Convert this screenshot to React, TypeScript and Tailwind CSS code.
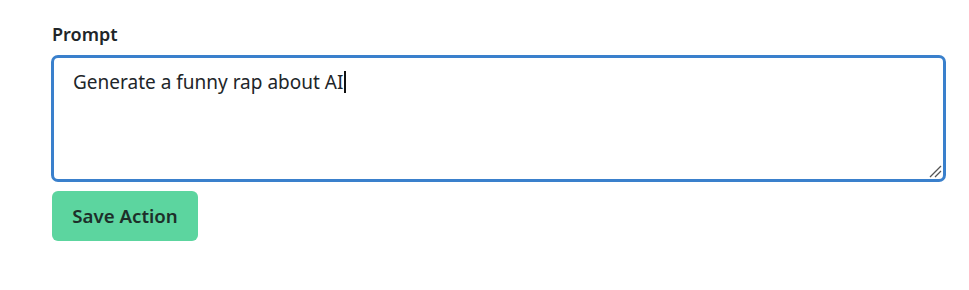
export default function App() {
  return (
    <div
      className="min-h-screen bg-white px-[52px] pt-[22px] text-[#212529]"
      style={{ fontFamily: '"Segoe UI", "Noto Sans", "Open Sans", sans-serif' }}
    >
      <label className="block text-[18px] font-semibold leading-6">Prompt</label>
      <div className="relative mt-[9px] -ml-px h-[127px] w-[895px] rounded-[7px] border-[3px] border-[#3a80cc] px-[19px] pt-[9px]">
        <p className="text-[19px] leading-7">
          Generate a funny rap about AI
          <span className="ml-px inline-block h-[22px] w-[2px] translate-y-[4px] bg-[#111]" />
        </p>
        <svg
          viewBox="0 0 14 14"
          className="absolute bottom-[1px] right-[1px] h-[14px] w-[14px]"
          fill="none"
          stroke="#555"
          strokeWidth="1.3"
        >
          <path d="M2 13L13 2M7 13L13 7" />
        </svg>
      </div>
      <button className="mt-[9px] h-[50px] w-[146px] rounded-[6px] bg-[#5cd59f] text-[18.7px] font-semibold text-[#1d2f2a]">
        Save Action
      </button>
    </div>
  );
}
